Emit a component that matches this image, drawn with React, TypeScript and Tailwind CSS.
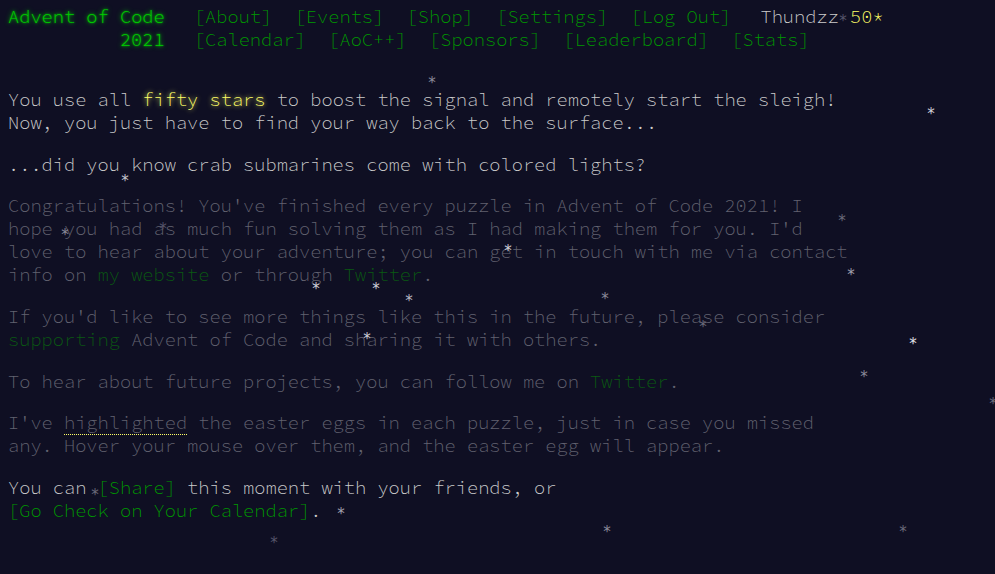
import React from "react"

const stars = [
    { x: 843, y: 19, c: "text-[#55556a]" },
    { x: 432, y: 81, c: "text-[#8a8a99]" },
    { x: 931, y: 112, c: "text-[#d0d0d8]" },
    { x: 125, y: 179, c: "text-[#c8c8d0]" },
    { x: 65, y: 233, c: "text-[#8a8a99]" },
    { x: 163, y: 227, c: "text-[#55556a]" },
    { x: 842, y: 219, c: "text-[#6a6a7a]" },
    { x: 508, y: 249, c: "text-[#d0d0d8]" },
    { x: 851, y: 273, c: "text-[#a0a0ad]" },
    { x: 316, y: 287, c: "text-[#d0d0d8]" },
    { x: 376, y: 287, c: "text-[#d0d0d8]" },
    { x: 409, y: 299, c: "text-[#b8b8c2]" },
    { x: 605, y: 297, c: "text-[#8a8a99]" },
    { x: 703, y: 325, c: "text-[#6a6a7a]" },
    { x: 367, y: 337, c: "text-[#d0d0d8]" },
    { x: 913, y: 342, c: "text-[#e0e0e8]" },
    { x: 864, y: 375, c: "text-[#8a8a99]" },
    { x: 993, y: 402, c: "text-[#6a6a7a]" },
    { x: 95, y: 493, c: "text-[#6a6a7a]" },
    { x: 341, y: 512, c: "text-[#a0a0ad]" },
    { x: 274, y: 541, c: "text-[#55556a]" },
    { x: 607, y: 530, c: "text-[#8a8a99]" },
    { x: 903, y: 530, c: "text-[#6a6a7a]" },
]

const topMenu = ["About", "Events", "Shop", "Settings", "Log Out"]
const bottomMenu = ["Calendar", "AoC++", "Sponsors", "Leaderboard", "Stats"]

function Menu({ items }: { items: string[] }) {
    return (
        <ul className="flex">
            {items.map((e) => (
                <li key={e} className="px-[0.6em]">
                    <a className="text-[#009900]">[{e}]</a>
                </li>
            ))}
        </ul>
    )
}

export default function App() {
    const link = "text-[#009900] whitespace-nowrap"
    const quietLink = "text-[#0a5a12]"
    const glow = "[text-shadow:0_0_2px_#00cc00,0_0_5px_#00cc00]"

    return (
        <div className="relative min-h-[574px] overflow-hidden bg-[#0f0f23] text-[#cccccc] font-['Source_Code_Pro','DejaVu_Sans_Mono',monospace] text-[18.67px] leading-[23px] font-light">
            <header className="flex flex-col pl-[8px] pt-[5px] whitespace-nowrap">
                <div className="flex">
                    <h1 className={`w-[14ch] text-[#00cc00] ${glow}`}>Advent of Code</h1>
                    <div className="pl-[18px] flex">
                        <Menu items={topMenu} />
                        <div className="pl-[18px]">
                            <span className="text-[#cccccc]">Thundzz</span>{" "}
                            <span className="text-[#ffff66]">50*</span>
                        </div>
                    </div>
                </div>
                <div className="flex">
                    <h1 className={`w-[14ch] text-right text-[#00cc00] ${glow}`}>2021</h1>
                    <div className="pl-[18px]">
                        <Menu items={bottomMenu} />
                    </div>
                </div>
            </header>

            <main className="pl-[8px] pt-[37px] w-[calc(75ch+8px)]">
                <article className="flex flex-col gap-[1em] font-light">
                    <p>
                        You use all{" "}
                        <span className="text-[#ffff66] [text-shadow:0_0_5px_#ffff66]">fifty stars</span> to boost the
                        signal and remotely start the sleigh! Now, you just have to find your way back to the surface...
                    </p>
                    <p>...did you know crab submarines come with colored lights?</p>
                    <p className="text-[#626270]">
                        Congratulations! You've finished every puzzle in Advent of Code 2021! I hope you had as much fun
                        solving them as I had making them for you. I'd love to hear about your adventure; you can get in
                        touch with me via contact info on <a className={quietLink}>my website</a> or through{" "}
                        <a className={quietLink}>Twitter</a>.
                    </p>
                    <p className="text-[#626270]">
                        If you'd like to see more things like this in the future, please consider{" "}
                        <a className={quietLink}>supporting</a> Advent of Code and sharing it with others.
                    </p>
                    <p className="text-[#626270]">
                        To hear about future projects, you can follow me on <a className={quietLink}>Twitter</a>.
                    </p>
                    <p className="text-[#626270]">
                        I've{" "}
                        <span className="border-b border-dotted border-[#ffff66]">highlighted</span> the easter eggs
                        in each puzzle, just in case you missed any. Hover your mouse over them, and the easter egg will
                        appear.
                    </p>
                    <p>
                        You can <a className={link}>[Share]</a> this moment with your friends, or{" "}
                        <a className={link}>[Go Check on Your Calendar]</a>.
                    </p>
                </article>
            </main>

            {stars.map((s, i) => (
                <span
                    key={i}
                    className={`absolute text-[15px] leading-none font-normal font-['DejaVu_Sans_Mono',monospace] -translate-x-1/2 -translate-y-[35%] ${s.c}`}
                    style={{ left: s.x, top: s.y }}
                >
                    *
                </span>
            ))}
        </div>
    )
}
